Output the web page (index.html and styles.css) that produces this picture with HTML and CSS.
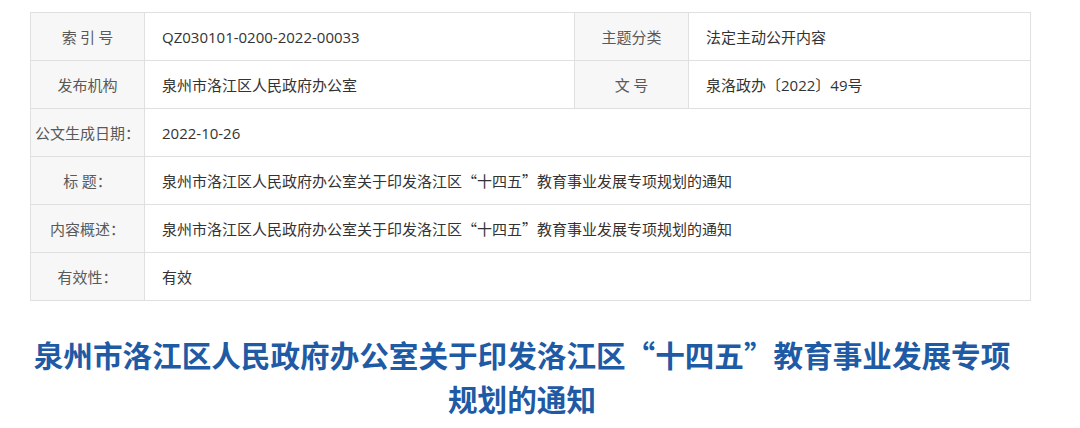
FILE: index.html
```html
<!DOCTYPE html>
<html lang="zh-CN">
<head>
<meta charset="utf-8">
<title>泉州市洛江区人民政府办公室</title>
<link rel="stylesheet" href="styles.css">
</head>
<body>
<div class="page">
  <table class="meta">
    <colgroup>
      <col class="c-label"><col class="c-value-wide"><col class="c-label"><col class="c-value">
    </colgroup>
    <tr>
      <th>索 引 号</th><td><span class="latin">QZ030101-0200-2022-00033</span></td>
      <th>主题分类</th><td>法定主动公开内容</td>
    </tr>
    <tr>
      <th>发布机构</th><td>泉州市洛江区人民政府办公室</td>
      <th>文 号</th><td>泉洛政办〔<span class="latin">2022</span>〕<span class="latin">49</span>号</td>
    </tr>
    <tr>
      <th>公文生成日期：</th><td colspan="3"><span class="latin">2022-10-26</span></td>
    </tr>
    <tr>
      <th>标 题：</th><td colspan="3">泉州市洛江区人民政府办公室关于印发洛江区“十四五”教育事业发展专项规划的通知</td>
    </tr>
    <tr>
      <th>内容概述：</th><td colspan="3">泉州市洛江区人民政府办公室关于印发洛江区“十四五”教育事业发展专项规划的通知</td>
    </tr>
    <tr>
      <th>有效性：</th><td colspan="3">有效</td>
    </tr>
  </table>
  <h1 class="title">泉州市洛江区人民政府办公室关于印发洛江区“十四五”教育事业发展专项规划的通知</h1>
</div>
</body>
</html>
```
FILE: styles.css
```css
html, body {
  margin: 0;
  padding: 0;
  background: #ffffff;
}
body {
  font-family: "Noto Sans CJK SC", sans-serif;
}
.page {
  width: 1001px;
  margin-left: 30px;
  padding-top: 12px;
}
.meta {
  width: 1001px;
  border-collapse: collapse;
  table-layout: fixed;
  font-size: 15px;
}
.c-label { width: 114px; }
.c-value-wide { width: 430px; }
.c-value { width: auto; }
.meta th, .meta td {
  height: 47px;
  border: 1px solid #e0e0e0;
  padding: 0;
  line-height: 20px;
  white-space: nowrap;
}
.meta th {
  background: #f7f7f7;
  color: #595959;
  font-weight: normal;
  text-align: center;
}
.meta td {
  color: #333333;
  text-align: left;
  padding-left: 17px;
}
.latin {
  font-family: "Open Sans", sans-serif;
  line-height: 20px;
}
.title {
  margin: 32px 0 0;
  padding-right: 17px;
  font-size: 29.6px;
  line-height: 44px;
  font-weight: bold;
  color: #1f5aa5;
  text-align: center;
}
```
